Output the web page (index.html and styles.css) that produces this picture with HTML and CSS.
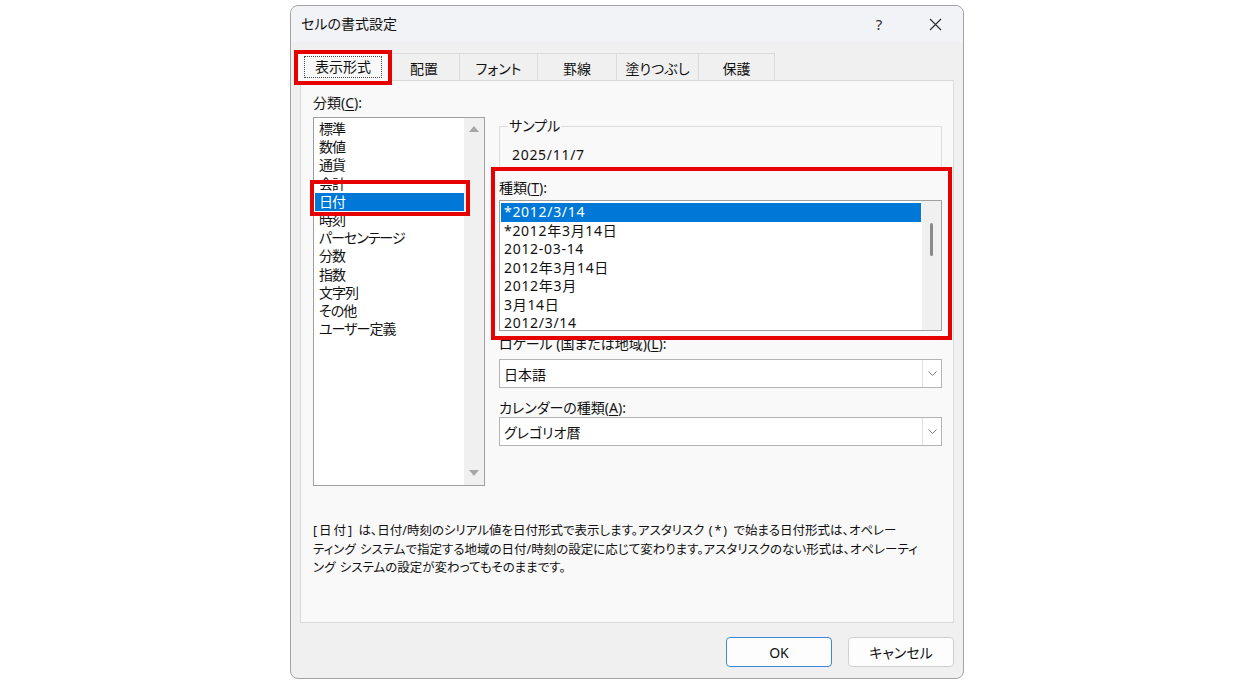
FILE: index.html
```html
<!DOCTYPE html>
<html lang="ja">

<head>
    <meta charset="UTF-8">
    <title>セルの書式設定</title>
    <link rel="stylesheet" href="styles.css">
</head>

<body>
    <div class="dialog">
        <div class="titlebar">
            <span class="title">セルの書式設定</span>
            <span class="tb-btn help">?</span>
            <span class="tb-btn close">
                <svg width="13" height="13" viewBox="0 0 13 13"><path d="M1 1L12 12M12 1L1 12" stroke="#2b2b2b" stroke-width="1.1" fill="none"/></svg>
            </span>
        </div>

        <div class="tabs">
            <div class="tab active"><span class="focus">表示形式</span></div>
            <div class="tab t-align">配置</div>
            <div class="tab t-font">フォント</div>
            <div class="tab t-border">罫線</div>
            <div class="tab t-fill">塗りつぶし</div>
            <div class="tab t-protect">保護</div>
        </div>

        <div class="panel">
            <div class="columns">
                <div class="col-left">
                    <div class="label">分類(<u>C</u>):</div>
                    <div class="listbox category">
                        <ul class="items">
                            <li>標準</li>
                            <li>数値</li>
                            <li>通貨</li>
                            <li>会計</li>
                            <li class="sel">日付</li>
                            <li>時刻</li>
                            <li>パーセンテージ</li>
                            <li>分数</li>
                            <li>指数</li>
                            <li>文字列</li>
                            <li>その他</li>
                            <li>ユーザー定義</li>
                        </ul>
                        <div class="vscroll">
                            <span class="arrow up"></span>
                            <span class="arrow down"></span>
                        </div>
                    </div>
                </div>

                <div class="col-right">
                    <fieldset class="sample">
                        <legend>サンプル</legend>
                        <div class="sample-value">2025/11/7</div>
                    </fieldset>

                    <div class="label type-label">種類(<u>T</u>):</div>
                    <div class="listbox types">
                        <ul class="items">
                            <li class="sel">*2012/3/14</li>
                            <li>*2012年3月14日</li>
                            <li>2012-03-14</li>
                            <li>2012年3月14日</li>
                            <li>2012年3月</li>
                            <li>3月14日</li>
                            <li>2012/3/14</li>
                        </ul>
                        <div class="vscroll thin">
                            <span class="thumb"></span>
                        </div>
                    </div>

                    <div class="label locale-label">ロケール (国または地域)(<u>L</u>):</div>
                    <div class="combo">
                        <span class="combo-text">日本語</span>
                        <span class="combo-btn"><svg width="9" height="5" viewBox="0 0 9 5"><path d="M0.5 0.5L4.5 4.5L8.5 0.5" fill="none" stroke="#7a7a7a"/></svg></span>
                    </div>

                    <div class="label cal-label">カレンダーの種類(<u>A</u>):</div>
                    <div class="combo">
                        <span class="combo-text">グレゴリオ暦</span>
                        <span class="combo-btn"><svg width="9" height="5" viewBox="0 0 9 5"><path d="M0.5 0.5L4.5 4.5L8.5 0.5" fill="none" stroke="#7a7a7a"/></svg></span>
                    </div>
                </div>
            </div>

            <p class="desc"><span class="wide">[日付]</span> は、日付/時刻のシリアル値を日付形式で表示します。アスタリスク <span class="wide">(*)</span> で始まる日付形式は、オペレー<br>ティング システムで指定する地域の日付/時刻の設定に応じて変わります。アスタリスクのない形式は、オペレーティ<br>ング システムの設定が変わってもそのままです。</p>
        </div>

        <div class="buttons">
            <button type="button" class="btn primary">OK</button>
            <button type="button" class="btn">キャンセル</button>
        </div>

        <!-- 赤枠の注記 -->
        <div class="mark mark-tab"></div>
        <div class="mark mark-cat"></div>
        <div class="mark mark-type"></div>
    </div>
</body>

</html>
```

FILE: styles.css
```css
* {
    margin: 0;
    padding: 0;
    box-sizing: border-box;
}

body {
    background: #fff;
    font-family: "Noto Sans", "Noto Sans CJK JP", sans-serif;
    font-size: 14px;
    color: #111;
    font-feature-settings: "palt";
}

.dialog {
    position: relative;
    width: 674px;
    height: 674px;
    margin: 5px 0 0 290px;
    border: 1px solid #a3a3a3;
    border-radius: 8px;
    background: #f0f0f0;
}

/* title bar */
.titlebar {
    display: flex;
    align-items: center;
    height: 36px;
    padding-left: 10px;
    background: #f1f3f6;
    border-radius: 8px 8px 0 0;
}

.title {
    flex: 1;
    line-height: 18px;
}

.tb-btn {
    display: flex;
    align-items: center;
    justify-content: center;
    width: 56px;
    height: 36px;
}

.help {
    font-size: 15px;
    color: #2b2b2b;
}

/* tabs */
.tabs {
    display: flex;
    align-items: flex-end;
    height: 27px;
    margin: 11px 9px 0;
}

.tab {
    display: flex;
    align-items: center;
    justify-content: center;
    height: 27px;
    padding-top: 3px;
    border-top: 1px solid #dadada;
    border-right: 1px solid #dadada;
    background: #f0f0f0;
    line-height: 18px;
}

.tab.active {
    position: relative;
    z-index: 1;
    width: 92px;
    height: 31px;
    margin: 0 0 -1px -3px;
    padding-top: 1px;
    border: 1px solid #dadada;
    border-bottom: none;
    background: #f9f9f9;
}

.focus {
    padding: 1px 10px;
    border: 1px dotted #444;
}

.t-align { width: 71px; }
.t-font { width: 78px; }
.t-border { width: 79px; }
.t-fill { width: 82px; }
.t-protect { width: 76px; }

/* panel */
.panel {
    height: 543px;
    margin: 0 9px;
    padding: 13px 11px 0 12px;
    border: 1px solid #dadada;
    background: #f9f9f9;
}

.columns {
    display: flex;
    gap: 14px;
}

.col-left {
    width: 172px;
}

.col-right {
    width: 443px;
}

.label {
    height: 18px;
    line-height: 18px;
    white-space: nowrap;
}

.label u {
    text-underline-offset: 2px;
}

.listbox {
    display: flex;
    margin-top: 5px;
    border: 1px solid #a0a0a0;
    background: #fff;
}

.items {
    flex: 1;
    list-style: none;
    padding: 2px 0 0 1px;
}

.items li {
    white-space: nowrap;
}

.items li.sel {
    background: #0078d7;
    color: #fff;
}

.category {
    height: 369px;
}

.category li {
    height: 18.2px;
    line-height: 18.2px;
    padding-left: 4px;
    letter-spacing: -1px;
}

.vscroll {
    display: flex;
    flex-direction: column;
    justify-content: space-between;
    align-items: center;
    width: 20px;
    padding: 8px 0 9px;
    background: #f0f0f0;
}

.arrow {
    width: 0;
    height: 0;
    border-left: 5px solid transparent;
    border-right: 5px solid transparent;
}

.arrow.up {
    border-bottom: 6px solid #a6a6a6;
}

.arrow.down {
    border-top: 6px solid #a6a6a6;
}

/* right side */
.sample {
    margin-top: 23px;
    padding: 0 8px 6px;
    border: 1px solid #dcdcdc;
}

.sample legend {
    padding: 0 1px;
    line-height: 18px;
}

.sample-value {
    padding: 11px 0 0 4px;
    line-height: 18px;
    letter-spacing: 0.7px;
}

.type-label {
    margin-top: 8px;
}

.types {
    height: 131px;
    margin-top: 3px;
}

.types .items {
    padding: 2px 1px 0 1px;
}

.types li {
    height: 18.5px;
    line-height: 18.5px;
    padding-left: 3px;
    letter-spacing: 0.7px;
}

.vscroll.thin {
    justify-content: flex-start;
    width: 19px;
    padding: 22px 0 0;
}

.thumb {
    width: 3px;
    height: 33px;
    border-radius: 2px;
    background: #8a8a8a;
}

.locale-label {
    margin-top: 4px;
}

.combo {
    display: flex;
    height: 29px;
    margin-top: 6px;
    border: 1px solid #b4b4b4;
    background: #fff;
}

.combo-text {
    flex: 1;
    padding: 2px 0 0 4px;
    line-height: 25px;
}

.combo-btn {
    display: flex;
    align-items: center;
    justify-content: center;
    width: 19px;
    border-left: 1px solid #e0e0e0;
}

.cal-label {
    margin-top: 11px;
}

.cal-label + .combo {
    margin-top: 0;
}

.desc {
    margin-top: 36px;
    font-size: 12.5px;
    line-height: 18.5px;
    white-space: nowrap;
    word-spacing: 1px;
}

.desc .wide {
    letter-spacing: 2px;
}

/* buttons */
.buttons {
    display: flex;
    justify-content: flex-end;
    gap: 16px;
    margin-top: 14px;
    padding-right: 9px;
}

.btn {
    width: 106px;
    height: 30px;
    border: 1px solid #d0d0d0;
    border-radius: 4px;
    background: #fdfdfd;
    font-family: inherit;
    font-size: 14px;
    color: #111;
    font-feature-settings: "palt";
}

.btn.primary {
    border-color: #3d8ad8;
}

/* red annotation boxes */
.mark {
    position: absolute;
    z-index: 2;
    border: 4px solid #e60000;
}

.mark-tab {
    left: 3px;
    top: 44px;
    width: 98px;
    height: 35px;
}

.mark-cat {
    left: 19px;
    top: 174px;
    width: 160px;
    height: 36px;
}

.mark-type {
    left: 200px;
    top: 161px;
    width: 461px;
    height: 173px;
}
```
